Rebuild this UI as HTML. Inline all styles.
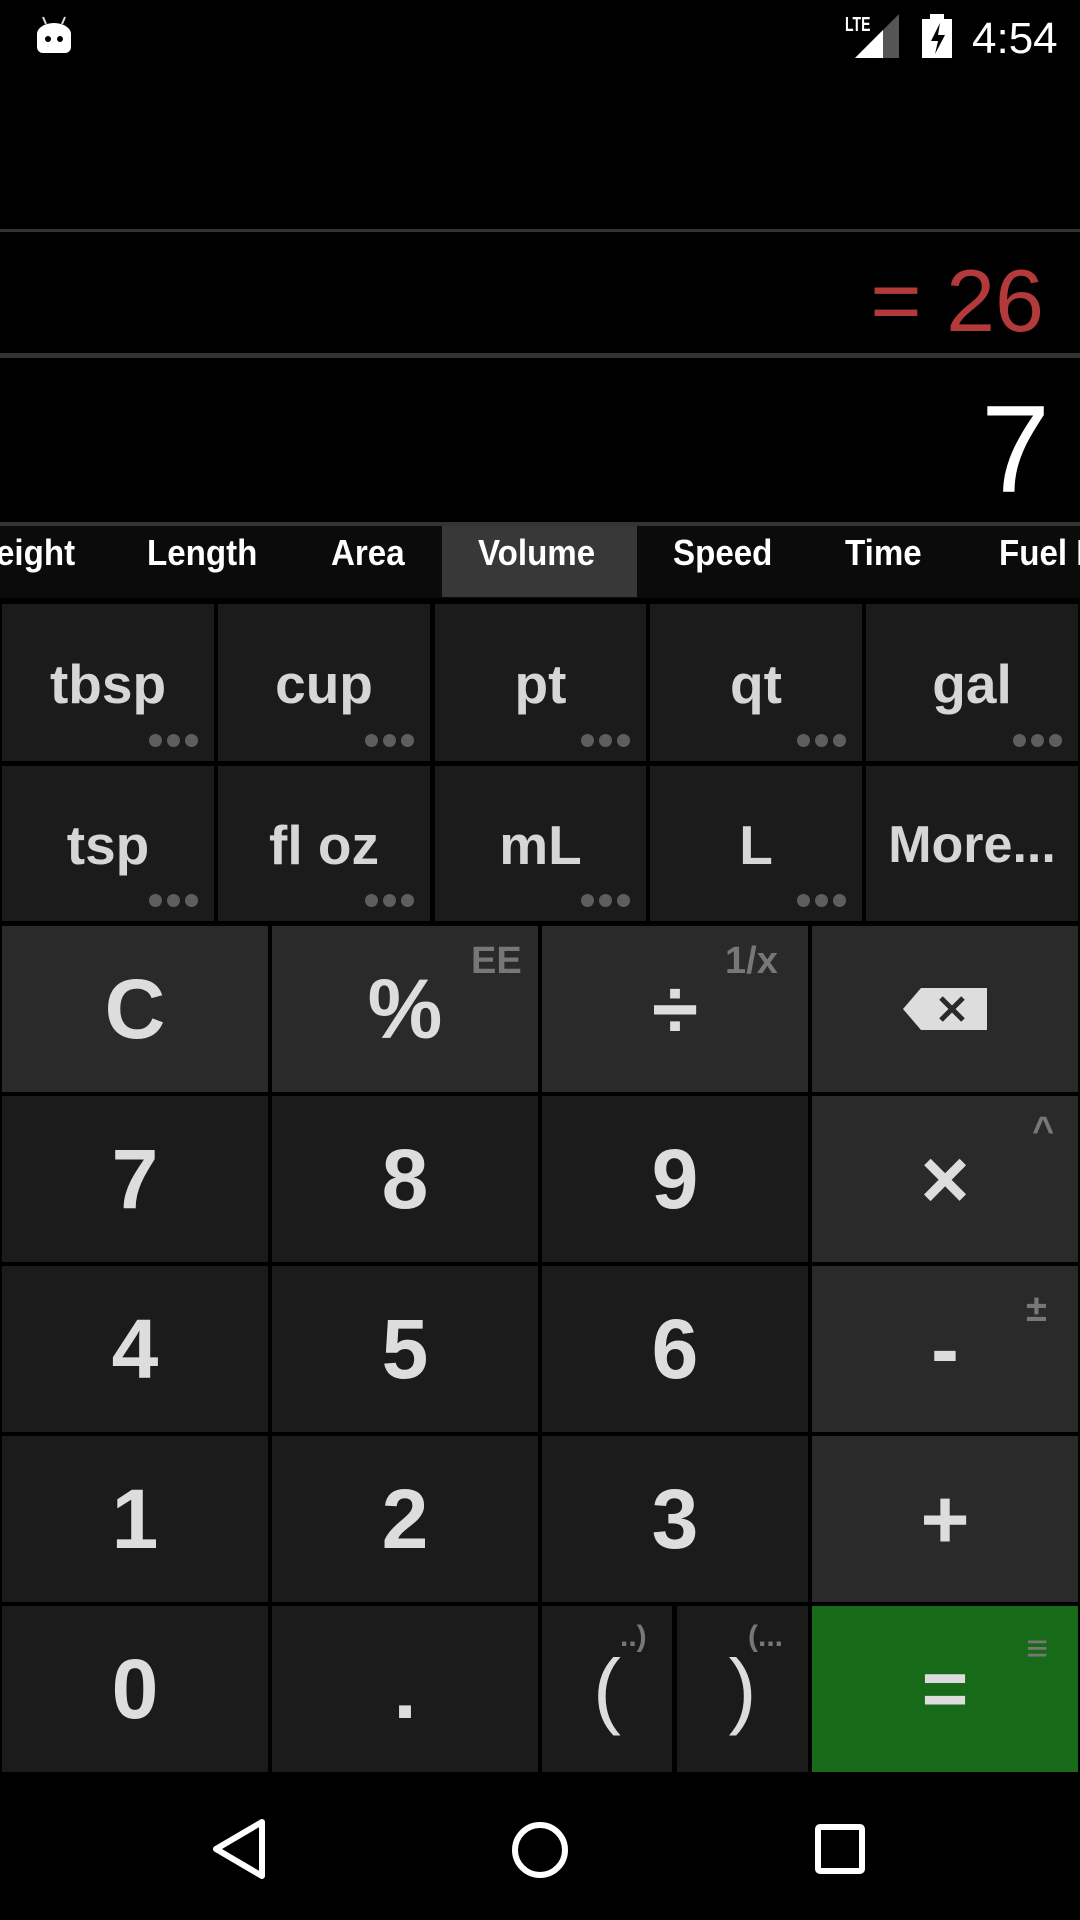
<!DOCTYPE html>
<html><head><meta charset="utf-8"><style>
*{margin:0;padding:0;box-sizing:border-box}
body{width:1080px;height:1920px;background:#000;position:relative;overflow:hidden;font-family:"Liberation Sans",sans-serif;color:#ddd}
.a{position:absolute}
.k{position:absolute;display:flex;align-items:center;justify-content:center;font-weight:bold}
.u{background:#1b1b1b;font-size:55px;color:#d6d6d6;padding-top:2px}
.u .d{position:absolute;right:16px;bottom:14px;display:flex;gap:5px}
.u .d i{width:13px;height:13px;border-radius:50%;background:#5e5e5e;display:block}
.p{background:#1b1b1b;font-size:84px;color:#ddd}
.o{background:#2a2a2a;font-size:84px;color:#ddd}
.s{position:absolute;color:#777;font-size:38px;font-weight:bold}
.t{position:absolute;top:532px;font-weight:bold;font-size:36px;color:#fff;transform:scaleX(.92);transform-origin:left;white-space:nowrap}
</style></head><body>
<!-- status bar -->
<svg class="a" style="left:34px;top:14px" width="40" height="40" viewBox="0 0 40 40"><path d="M9 3l3 7M31 3l-3 7" stroke="#ddd" stroke-width="2"/><path d="M3 20a17 11 0 0 1 34 0v13a6 6 0 0 1-6 6H9a6 6 0 0 1-6-6z" fill="#fff"/><circle cx="14" cy="25" r="3" fill="#000"/><circle cx="26" cy="25" r="3" fill="#000"/></svg>
<div class="a" style="left:845px;top:14px;font-size:20px;font-weight:bold;color:#fff;transform:scaleX(.7);transform-origin:left">LTE</div>
<svg class="a" style="left:855px;top:14px" width="44" height="44"><polygon points="44,0 44,44 0,44" fill="#555"/><polygon points="28,16 28,44 0,44" fill="#fff"/></svg>
<svg class="a" style="left:922px;top:14px" width="30" height="44"><rect x="8" y="0" width="14" height="6" fill="#fff"/><rect x="0" y="5" width="30" height="39" fill="#fff"/><path d="M18 9l-9 18h7l-3 13 10-19h-7z" fill="#000"/></svg>
<div class="a" style="left:972px;top:14px;font-size:44px;color:#fff">4:54</div>
<!-- display -->
<div class="a" style="left:0;top:229px;width:1080px;height:3px;background:#333"></div>
<div class="a" style="right:36px;top:246px;font-size:88px;color:#b33a3a;line-height:110px">= 26</div>
<div class="a" style="left:0;top:353px;width:1080px;height:5px;background:#333"></div>
<div class="a" style="right:30px;top:380px;font-size:124px;color:#fff;line-height:140px">7</div>
<div class="a" style="left:0;top:522px;width:1080px;height:4px;background:#333"></div>
<!-- tabs -->
<div class="a" style="left:0;top:526px;width:1080px;height:72px;background:#0b0b0b"></div>
<div class="a" style="left:442px;top:526px;width:195px;height:71px;background:#383838"></div>
<div class="t" style="left:-4px">eight</div>
<div class="t" style="left:147px">Length</div>
<div class="t" style="left:331px">Area</div>
<div class="t" style="left:478px">Volume</div>
<div class="t" style="left:673px">Speed</div>
<div class="t" style="left:845px">Time</div>
<div class="t" style="left:999px">Fuel E</div>
<!-- units -->
<div class="k u" style="left:2px;top:604px;width:212px;height:157px">tbsp<div class="d"><i></i><i></i><i></i></div></div>
<div class="k u" style="left:218px;top:604px;width:212px;height:157px">cup<div class="d"><i></i><i></i><i></i></div></div>
<div class="k u" style="left:435px;top:604px;width:211px;height:157px">pt<div class="d"><i></i><i></i><i></i></div></div>
<div class="k u" style="left:650px;top:604px;width:212px;height:157px">qt<div class="d"><i></i><i></i><i></i></div></div>
<div class="k u" style="left:866px;top:604px;width:212px;height:157px">gal<div class="d"><i></i><i></i><i></i></div></div>
<div class="k u" style="left:2px;top:766px;width:212px;height:155px">tsp<div class="d"><i></i><i></i><i></i></div></div>
<div class="k u" style="left:218px;top:766px;width:212px;height:155px">fl oz<div class="d"><i></i><i></i><i></i></div></div>
<div class="k u" style="left:435px;top:766px;width:211px;height:155px">mL<div class="d"><i></i><i></i><i></i></div></div>
<div class="k u" style="left:650px;top:766px;width:212px;height:155px">L<div class="d"><i></i><i></i><i></i></div></div>
<div class="k u" style="left:866px;top:766px;width:212px;height:155px;font-size:52px">More...</div>
<!-- keypad -->
<div class="k o" style="left:2px;top:926px;width:266px;height:166px">C</div>
<div class="k o" style="left:272px;top:926px;width:266px;height:166px">%</div>
<div class="k o" style="left:542px;top:926px;width:266px;height:166px">÷</div>
<div class="k o" style="left:812px;top:926px;width:266px;height:166px"><svg width="84" height="42" viewBox="0 0 84 42"><path d="M18 0H84V42H18L0 21Z" fill="#ddd"/><path d="M38 10l22 22M60 10L38 32" stroke="#2a2a2a" stroke-width="5"/></svg></div>
<div class="s" style="left:471px;top:940px">EE</div>
<div class="s" style="left:725px;top:940px">1/x</div>
<div class="k p" style="left:2px;top:1096px;width:266px;height:166px">7</div>
<div class="k p" style="left:272px;top:1096px;width:266px;height:166px">8</div>
<div class="k p" style="left:542px;top:1096px;width:266px;height:166px">9</div>
<div class="k o" style="left:812px;top:1096px;width:266px;height:166px">×</div>
<div class="s" style="left:1032px;top:1110px">^</div>
<div class="k p" style="left:2px;top:1266px;width:266px;height:166px">4</div>
<div class="k p" style="left:272px;top:1266px;width:266px;height:166px">5</div>
<div class="k p" style="left:542px;top:1266px;width:266px;height:166px">6</div>
<div class="k o" style="left:812px;top:1266px;width:266px;height:166px">-</div>
<div class="s" style="left:1026px;top:1288px">±</div>
<div class="k p" style="left:2px;top:1436px;width:266px;height:166px">1</div>
<div class="k p" style="left:272px;top:1436px;width:266px;height:166px">2</div>
<div class="k p" style="left:542px;top:1436px;width:266px;height:166px">3</div>
<div class="k o" style="left:812px;top:1436px;width:266px;height:166px">+</div>
<div class="k p" style="left:2px;top:1606px;width:266px;height:166px">0</div>
<div class="k p" style="left:272px;top:1606px;width:266px;height:166px">.</div>
<div class="k p" style="left:542px;top:1606px;width:130px;height:166px;font-weight:normal">(</div>
<div class="k p" style="left:677px;top:1606px;width:131px;height:166px;font-weight:normal">)</div>
<div class="s" style="left:620px;top:1620px;font-size:30px">..)</div>
<div class="s" style="left:748px;top:1620px;font-size:30px">(...</div>
<div class="k" style="left:812px;top:1606px;width:266px;height:166px;background:#176a17;font-size:80px;color:#ddd;font-weight:bold">=</div>
<div class="s" style="left:1026px;top:1628px">≡</div>
<!-- nav -->
<svg class="a" style="left:210px;top:1818px" width="60" height="62"><path d="M52 4V58L6 31Z" fill="none" stroke="#fff" stroke-width="6" stroke-linejoin="round"/></svg>
<svg class="a" style="left:510px;top:1820px" width="60" height="60"><circle cx="30" cy="30" r="25" fill="none" stroke="#fff" stroke-width="6"/></svg>
<svg class="a" style="left:814px;top:1823px" width="52" height="52"><rect x="4" y="4" width="44" height="44" rx="2" fill="none" stroke="#fff" stroke-width="6"/></svg>
</body></html>
